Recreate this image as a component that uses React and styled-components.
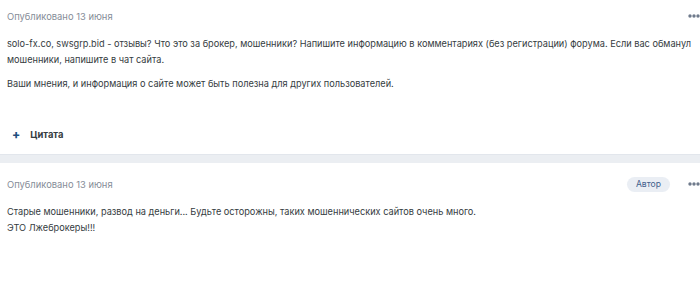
import React from 'react';
import styled, { createGlobalStyle } from 'styled-components';

const GlobalStyle = createGlobalStyle`
  html, body {
    margin: 0;
    padding: 0;
    background: #ffffff;
  }
  body {
    font-family: Inter, "Noto Sans", sans-serif;
    color: #353c41;
    width: 700px;
    overflow: hidden;
  }
`;

const posts = [
  {
    date: 'Опубликовано 13 июня',
    author: false,
    paragraphs: [
      'solo-fx.co, swsgrp.bid - отзывы? Что это за брокер, мошенники? Напишите информацию в комментариях (без регистрации) форума. Если вас обманул мошенники, напишите в чат сайта.',
      'Ваши мнения, и информация о сайте может быть полезна для других пользователей.',
    ],
    quote: true,
  },
  {
    date: 'Опубликовано 13 июня',
    author: true,
    paragraphs: [
      'Старые мошенники, развод на деньги... Будьте осторожны, таких мошеннических сайтов очень много.\nЭТО Лжеброкеры!!!',
    ],
    quote: false,
  },
];

const Dots = () => (
  <svg width="12" height="4" viewBox="0 0 12 4">
    <circle cx="2" cy="2" r="1.7" fill="#6f7a8c" />
    <circle cx="6" cy="2" r="1.7" fill="#6f7a8c" />
    <circle cx="10" cy="2" r="1.7" fill="#6f7a8c" />
  </svg>
);

const Post = ({ post, first }) => (
  <Article $first={first}>
    <Header>
      <DateText>{post.date}</DateText>
      <Tools>
        {post.author && <Badge>Автор</Badge>}
        <MenuButton><Dots /></MenuButton>
      </Tools>
    </Header>
    <Content>
      {post.paragraphs.map((p, i) => (
        <Paragraph key={i}>{p}</Paragraph>
      ))}
    </Content>
    {post.quote && (
      <Footer>
        <QuoteLink><Plus>+</Plus>Цитата</QuoteLink>
      </Footer>
    )}
  </Article>
);

const App = () => (
  <>
    <GlobalStyle />
    <Page>
      <Post post={posts[0]} first />
      <Divider />
      <Post post={posts[1]} />
    </Page>
  </>
);

const Page = styled.div`
  display: flex;
  flex-direction: column;
`;

const Article = styled.article`
  background: #ffffff;
  padding: ${props => (props.$first ? '0' : '5px')} 0 0 7px;
`;

const Header = styled.div`
  display: flex;
  align-items: center;
  justify-content: space-between;
  height: 32px;
`;

const DateText = styled.span`
  font-size: 9.4px;
  color: #868d98;
`;

const Tools = styled.div`
  display: flex;
  align-items: center;
  gap: 18px;
`;

const Badge = styled.span`
  background: #eaeef4;
  color: #44618c;
  font-size: 8.6px;
  border-radius: 8px;
  padding: 1px 9px;
  line-height: 13px;
`;

const MenuButton = styled.span`
  display: flex;
  align-items: center;
  width: 12px;
`;

const Content = styled.div`
  padding-top: 4px;
  font-size: 9.2px;
  line-height: 16px;
  color: #353c41;
`;

const Paragraph = styled.p`
  margin: 0 0 8px;
  white-space: pre-line;
`;

const Footer = styled.div`
  height: 54px;
  display: flex;
  align-items: center;
  padding-top: 14px;
  padding-left: 5px;
  box-sizing: border-box;
`;

const QuoteLink = styled.span`
  font-size: 9.4px;
  font-weight: 700;
  color: #353c41;
  display: flex;
  align-items: center;
`;

const Plus = styled.span`
  color: #1e4f7e;
  font-weight: 800;
  font-size: 12px;
  margin-right: 10px;
`;

const Divider = styled.div`
  height: 8px;
  background: #ebeef2;
  border-top: 1px solid #e2e6ec;
`;

export default App;
